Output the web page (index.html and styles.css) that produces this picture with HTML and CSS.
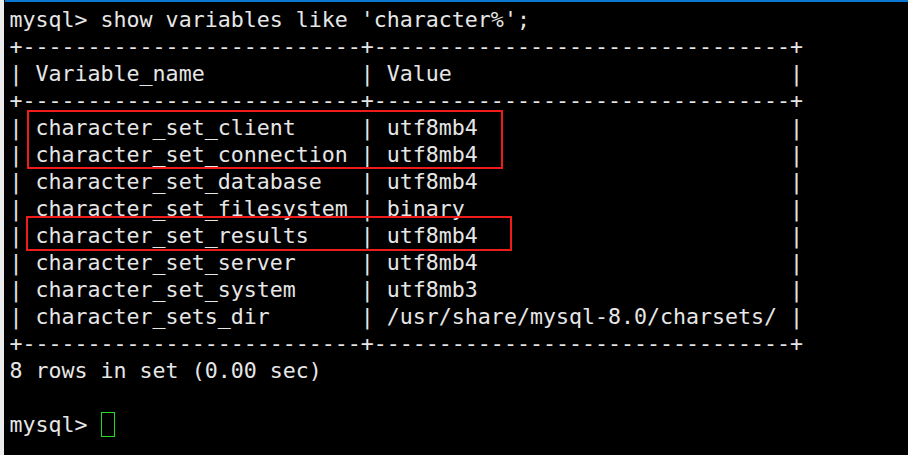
FILE: index.html
```html
<!DOCTYPE html>
<html>
<head>
<meta charset="utf-8">
<link rel="stylesheet" href="styles.css">
</head>
<body>
<div class="window">
  <div class="edge"></div>
  <div class="main">
    <div class="topbar"></div>
    <div class="terminal">
<pre class="screen">mysql&gt; show variables like 'character%';
+--------------------------+--------------------------------+
| Variable_name            | Value                          |
+--------------------------+--------------------------------+
| character_set_client     | utf8mb4                        |
| character_set_connection | utf8mb4                        |
| character_set_database   | utf8mb4                        |
| character_set_filesystem | binary                         |
| character_set_results    | utf8mb4                        |
| character_set_server     | utf8mb4                        |
| character_set_system     | utf8mb3                        |
| character_sets_dir       | /usr/share/mysql-8.0/charsets/ |
+--------------------------+--------------------------------+
8 rows in set (0.00 sec)

mysql&gt; <span class="cursor"></span></pre>
      <div class="mark mark-a"></div>
      <div class="mark mark-b"></div>
    </div>
  </div>
</div>
</body>
</html>
```

FILE: styles.css
```css
html, body {
  margin: 0;
  padding: 0;
  background: #000;
  width: 908px;
  height: 455px;
  overflow: hidden;
}

.window {
  display: flex;
  width: 908px;
  height: 455px;
}

.edge {
  width: 4px;
  flex: none;
  background: #ececec;
}

.main {
  flex: 1;
  display: flex;
  flex-direction: column;
  background: #000;
}

.topbar {
  height: 2px;
  margin-left: 1px;
  background: #0a78d2;
  flex: none;
}

.terminal {
  position: relative;
  flex: 1;
  padding: 3.5px 0 0 5.5px;
}

.screen {
  margin: 0;
  font-family: "DejaVu Sans Mono", monospace;
  font-size: 21.62px;
  line-height: 27px;
  color: #e6e6e6;
  white-space: pre;
}

.cursor {
  display: inline-block;
  box-sizing: border-box;
  width: 14px;
  height: 25px;
  margin-left: 0;
  margin-top: 1.5px;
  vertical-align: top;
  border: 1px solid #22dd22;
}

.mark {
  position: absolute;
  box-sizing: border-box;
  border: 2px solid #f01c1c;
}

/* box around client + connection rows */
.mark-a {
  left: 23px;
  top: 108px;
  width: 476px;
  height: 59px;
}

/* box around results row */
.mark-b {
  left: 22px;
  top: 214px;
  width: 486px;
  height: 35px;
}
```
